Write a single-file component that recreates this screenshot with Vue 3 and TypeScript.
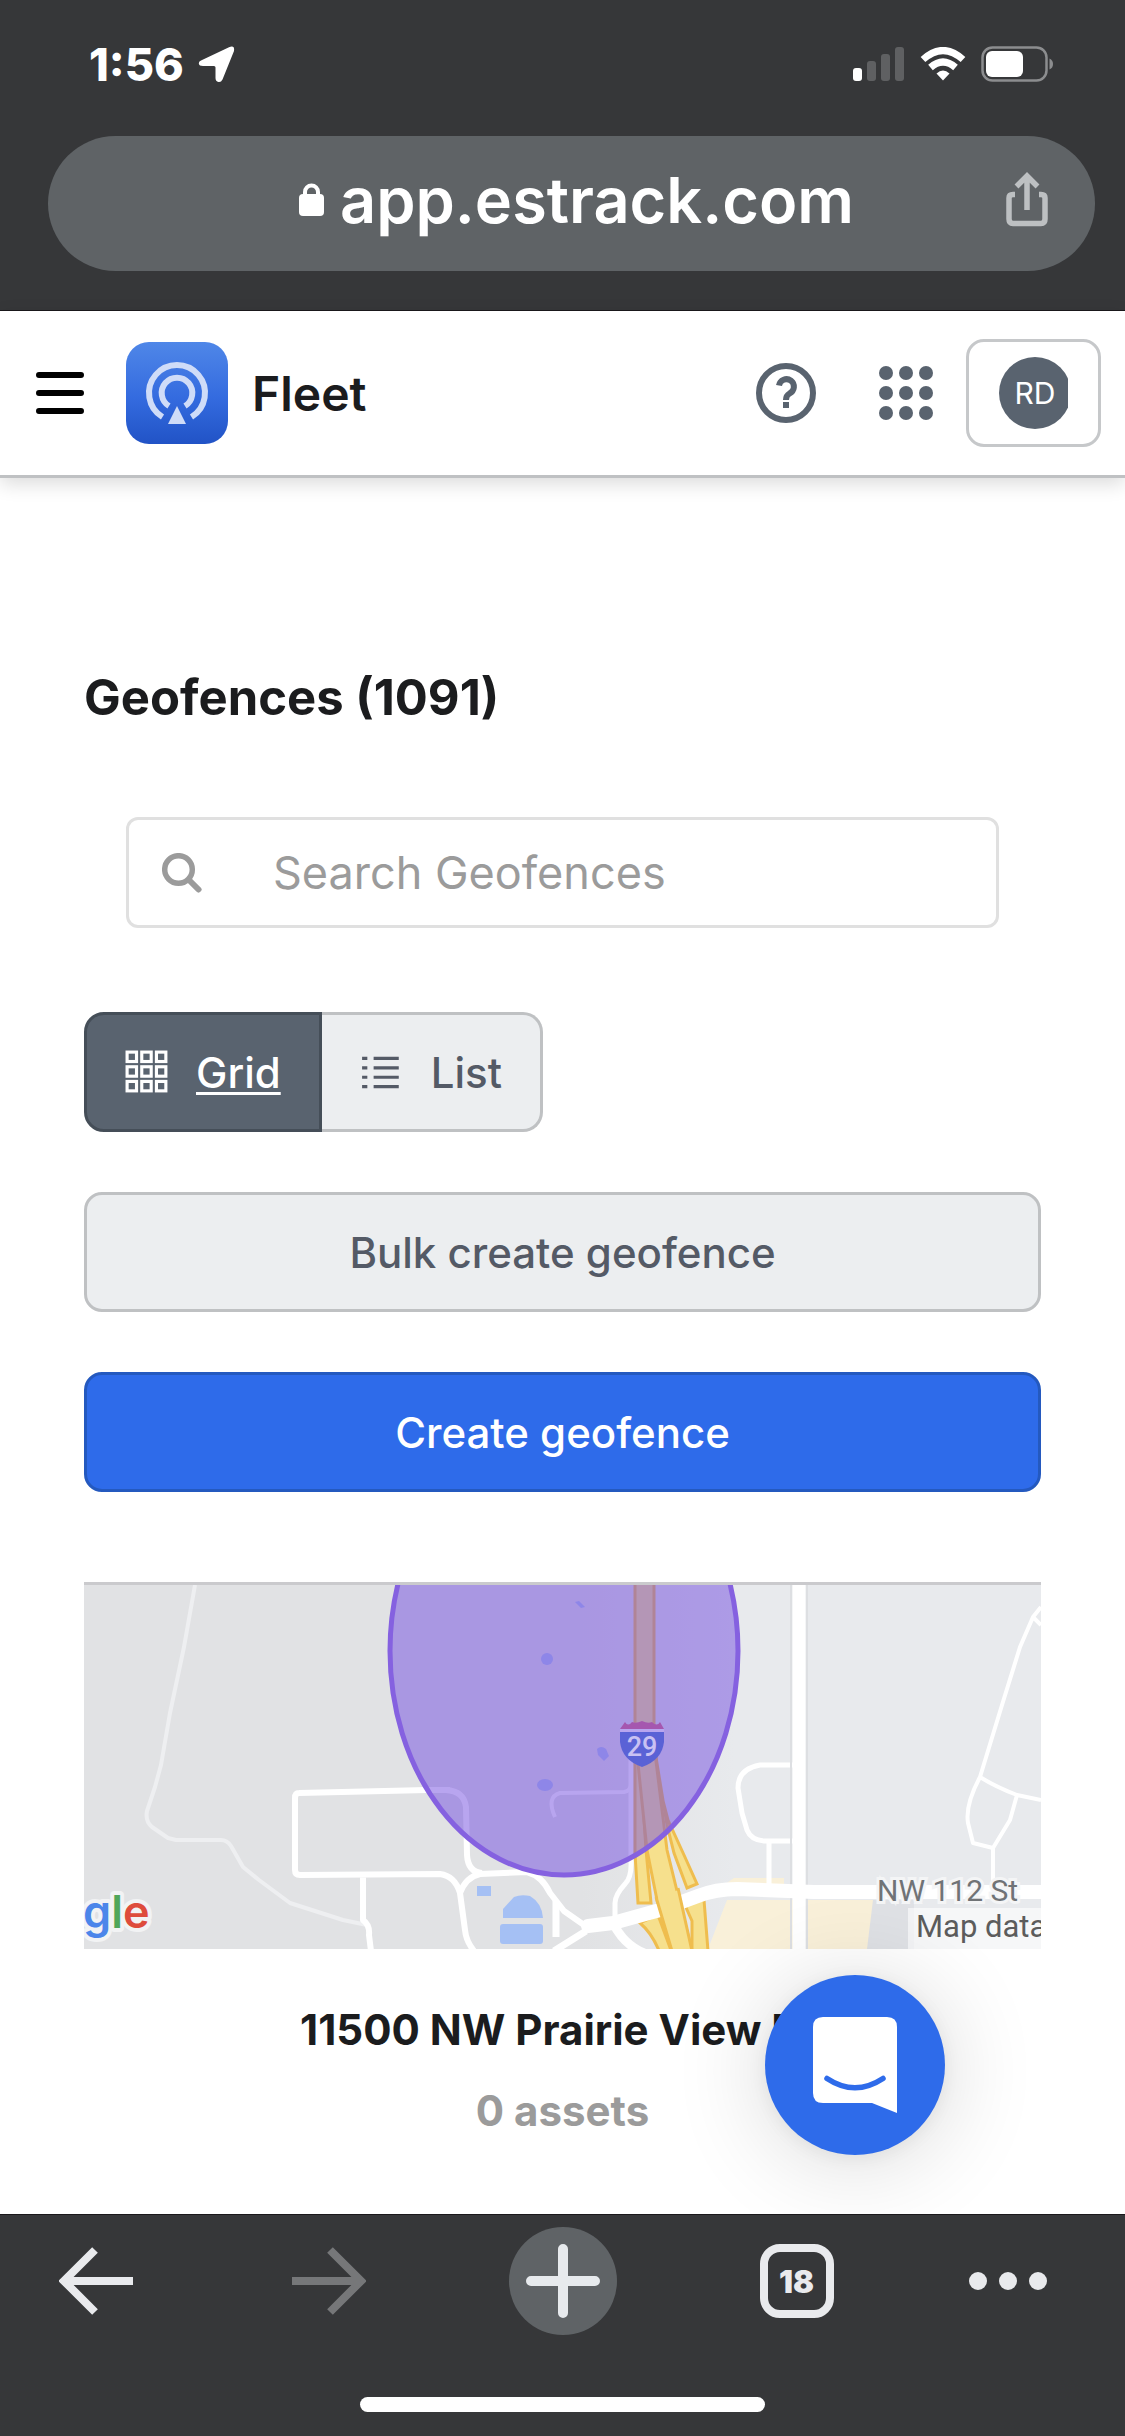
<script setup lang="ts">
import { ref } from 'vue'

type View = 'grid' | 'list'

const view = ref<View>('grid')
const query = ref('')
const total = 1091
const tabs = 18
const dots = [7, 27, 47]
const cells = [2, 16, 30]
const rows = [8, 17, 26, 35]
</script>

<template>
  <div class="screen">
    <div class="chrome">
      <div class="status">
        <div class="clock">
          <span>1:56</span>
          <svg width="38" height="38" viewBox="0 0 38 38" aria-hidden="true">
            <path d="M3 15.500 31 2.200Q37 0 36 6L24.500 34.500Q23 37.500 20.500 37Q17.500 36.500 17.500 33V22.500Q17.500 21 16 21H5Q1 21 .8 18.500Q.6 16.500 3 15.500Z" fill="#fff" />
          </svg>
        </div>
        <div class="indicators">
          <svg width="52" height="34" viewBox="0 0 52 34" aria-hidden="true">
            <rect x="0" y="21" width="9" height="13" rx="3" fill="#fff" />
            <rect x="14" y="14" width="9" height="20" rx="3" fill="#5f6062" />
            <rect x="28" y="7" width="9" height="27" rx="3" fill="#5f6062" />
            <rect x="42" y="0" width="9" height="34" rx="3" fill="#5f6062" />
          </svg>
          <svg width="46" height="34" viewBox="0 0 46 34" aria-hidden="true">
            <path d="M3 12.500Q23-5.500 43 12.500" fill="none" stroke="#fff" stroke-width="7" />
            <path d="M10.500 20.500Q23 9.500 35.500 20.500" fill="none" stroke="#fff" stroke-width="7" />
            <path d="M16.500 26.500Q23 20.500 29.500 26.500L23 33.500Z" fill="#fff" />
          </svg>
          <svg width="73" height="36" viewBox="0 0 73 36" aria-hidden="true">
            <rect x="1.500" y="1.500" width="64" height="33" rx="10" fill="none" stroke="#8c8d8f" stroke-width="2.500" />
            <rect x="5" y="5" width="37" height="26" rx="6" fill="#fff" />
            <path d="M68.500 12.500Q72 14 72 18T68.500 23.500Z" fill="#8c8d8f" />
          </svg>
        </div>
      </div>
      <div class="address">
        <a class="site" href="#">
          <svg width="25" height="34" viewBox="0 0 25 34" aria-hidden="true">
            <rect x="0" y="11" width="25" height="22" rx="4" fill="#fff" />
            <path d="M6 13V9A6.500 6.500 0 0 1 19 9V13" fill="none" stroke="#fff" stroke-width="4" />
          </svg>
          <span>app.estrack.com</span>
        </a>
        <button class="plain share" type="button" aria-label="Share">
          <svg width="42" height="55" viewBox="0 0 42 55" aria-hidden="true">
            <path d="M9 22.500H7Q3 22.500 3 26V47Q3 51.500 7 51.500H35Q39 51.500 39 47V26Q39 22.500 35 22.500H33M21 38V5M10.500 14.500 21 4 31.500 14.500" fill="none" stroke="#bdc0c2" stroke-width="5.500" />
          </svg>
        </button>
      </div>
    </div>

    <header class="topbar">
      <button class="plain" type="button" aria-label="Menu">
        <svg width="48" height="42" viewBox="0 0 48 42" aria-hidden="true">
          <path d="M3 3H45M3 21H45M3 39H45" stroke="#000" stroke-width="6" stroke-linecap="round" />
        </svg>
      </button>
      <a class="brand" href="#">
        <svg width="102" height="102" viewBox="0 0 102 102" aria-hidden="true">
          <defs>
            <linearGradient id="tile" x1="0" y1="0" x2="0" y2="1">
              <stop offset="0" stop-color="#4f87e8" />
              <stop offset=".55" stop-color="#346bdf" />
              <stop offset="1" stop-color="#2153c6" />
            </linearGradient>
          </defs>
          <rect width="102" height="102" rx="23" fill="url(#tile)" />
          <g fill="none" stroke="#cfdcf8" stroke-width="6">
            <path d="M36.500 75A28 28 0 1 1 65.500 75" />
            <path d="M43 64A15.300 15.300 0 1 1 59 64" />
          </g>
          <path d="M51 64 60 82H42Z" fill="#cfdcf8" />
        </svg>
        <span>Fleet</span>
      </a>
      <button class="plain help" type="button" aria-label="Help">
        <svg width="60" height="60" viewBox="0 0 60 60" aria-hidden="true">
          <circle cx="30" cy="30" r="27" fill="none" stroke="#59636f" stroke-width="6" />
          <path d="M23 22.500A7.500 7.500 0 1 1 33.500 30.500Q30 32.500 30 37" fill="none" stroke="#59636f" stroke-width="6" />
          <rect x="27" y="39" width="6" height="6" fill="#59636f" />
        </svg>
      </button>
      <button class="plain apps" type="button" aria-label="Apps">
        <svg width="54" height="54" viewBox="0 0 54 54" aria-hidden="true">
          <template v-for="y in dots" :key="y">
            <circle v-for="x in dots" :key="x" :cx="x" :cy="y" r="7" fill="#59636f" />
          </template>
        </svg>
      </button>
      <button class="account" type="button"><span class="clip"><span class="avatar">RD</span></span></button>
    </header>

    <main class="content">
      <h1>Geofences ({{ total }})</h1>

      <label class="search">
        <svg width="40" height="40" viewBox="0 0 40 40" aria-hidden="true">
          <circle cx="16.500" cy="16.500" r="13.800" fill="none" stroke="#9b9b9b" stroke-width="5.500" />
          <path d="M27 27 36.500 36.500" stroke="#9b9b9b" stroke-width="6" stroke-linecap="round" />
        </svg>
        <input v-model="query" type="text" placeholder="Search Geofences" aria-label="Search Geofences" />
      </label>

      <div class="views">
        <button type="button" :class="{ on: view === 'grid' }" @click="view = 'grid'">
          <svg width="44" height="44" viewBox="0 0 42 42" aria-hidden="true">
            <template v-for="y in cells" :key="y">
              <rect v-for="x in cells" :key="x" :x="x" :y="y" width="9" height="9" fill="none" stroke="currentColor" stroke-width="3" />
            </template>
          </svg>
          <span>Grid</span>
        </button>
        <button type="button" :class="{ on: view === 'list' }" @click="view = 'list'">
          <svg width="44" height="44" viewBox="0 0 42 42" aria-hidden="true">
            <path v-for="y in rows" :key="y" :d="`M2 ${y}H7M13 ${y}H37`" stroke="currentColor" stroke-width="3" />
          </svg>
          <span>List</span>
        </button>
      </div>

      <button class="action" type="button">Bulk create geofence</button>
      <button class="action primary" type="button">Create geofence</button>

      <article class="card">
        <svg class="map" viewBox="0 0 957 364" role="img" aria-label="Geofence map">
          <defs>
            <linearGradient id="land" x1="0" y1="0" x2="1" y2="0">
              <stop offset=".52" stop-color="#e1e2e4" />
              <stop offset=".68" stop-color="#e8eaed" />
            </linearGradient>
          </defs>
          <rect width="957" height="364" fill="url(#land)" />
          <path d="M783 315H830V364H783Z" fill="#dfe1e5" />
          <path d="M643 315H709V364H624ZM724 315H789L783 364H724ZM650 293H700V300H640Z" fill="#f9f0d9" />

          <g fill="none" stroke="#fff" stroke-linejoin="round">
            <path d="M111 0 100 62 86 128 77 180 71 202 63 226Q61 236 68 242L84 253 92 255H137Q143 255 147 261L159 282 175 295 206 318 259 335 283 340" stroke="#eeeff1" stroke-width="4" />
            <path d="M366 205H343L215 208Q211 208 211 213V285Q211 290 216 290L356 289Q371 291 376 308L381 345Q382 356 390 366M279 291V335Q286 340 285 350L287 366" stroke-width="6" />
            <path d="M362 205Q380 206 382 222L383 270Q384 287 398 288M376 308Q382 292 396 289L443 287Q458 291 466 308L480 326 500 340" stroke-width="6" />
            <path d="M470 366 502 346M472 316V352" stroke-width="7" />
            <path d="M529 338Q540 360 560 368" stroke-width="9" />
            <path d="M547 150V275Q548 292 541 299 531 310 531 318V336" stroke-width="5" />
            <path d="M471 232Q462 212 476 208L540 207Q546 206 547 200" stroke-width="4" />
            <path d="M709 180H676Q654 184 654 203L658 228 663 245Q667 255 680 256H709M685 257V300" stroke-width="5" />
            <path d="M957 22 949 32 936 62 918 120 896 192Q881 220 884 238L889 258 909 263M896 192Q912 202 933 210L957 215M933 210 926 235 909 263V300M949 32 957 40" stroke-width="4" />
          </g>
          <path d="M707 0V364M723 0V364" stroke="#dddfe2" stroke-width="2" />
          <path d="M715 0V364" stroke="#fff" stroke-width="13" />

          <g fill="#f6e08d" stroke="#efbd4e" stroke-width="3">
            <path d="M551 170V268L554 318H567L562 265 556 170Z" />
            <path d="M570 160 583 240 590 268 603 303 613 299 600 270 584 235 575 200 571 160Z" />
            <path d="M551-5V150L563 265 574 320 588 366H608L594 310 583 265 570 160V-5Z" />
            <path d="M556 338Q568 348 576 368H588L574 330ZM600 318 608 336 608 366H624L620 315Z" />
          </g>
          <path d="M957 307H730L653 304Q632 304 614 311L576 325 529 338 504 341" fill="none" stroke="#fff" stroke-width="14" stroke-linejoin="round" stroke-linecap="round" />
          <path d="M573 314 588 368H608L594 305Z" fill="#f6e08d" />
          <path d="M572 312 588 366M594 303 608 366" stroke="#efbd4e" stroke-width="3" />

          <g fill="#a5c0f4">
            <rect x="393" y="301" width="14" height="10" />
            <path d="M419 333V324L430 312Q437 309 446 311Q458 318 459 333Z" />
            <rect x="416" y="339" width="43" height="20" rx="3" />
          </g>

          <g>
            <path d="M541 137Q544 142 548 137 552 139 558 136 564 139 568 137 573 142 576 137L580 144H536Z" fill="#d8627f" />
            <path d="M536 147H580V157Q578 175 558 182Q538 175 536 157Z" fill="#4379cc" />
            <path d="M536 145.500H580" stroke="#fff" stroke-width="3" />
          </g>
          <ellipse cx="480" cy="66" rx="174" ry="224" fill="#714ce0" fill-opacity=".5" stroke="#8561e0" stroke-width="5" />
          <g fill="#8e86e8">
            <ellipse cx="463" cy="74" rx="6" ry="6" />
            <ellipse cx="461" cy="200" rx="8" ry="6" />
            <path d="M491 17 495 16 501 22 497 23Z" />
            <path d="M513 164Q517 160 522 164L525 171 520 176 514 170Z" />
          </g>
          <text x="558" y="171" text-anchor="middle" class="route">29</text>

          <rect x="824" y="323" width="133" height="41" fill="#fff" fill-opacity=".6" />
          <text x="793" y="316" class="street">NW 112 St</text>
          <text x="832" y="352" class="credit">Map data</text>
          <text x="-1" y="343" class="mark"><tspan fill="#4c86ea">g</tspan><tspan fill="#4fa65a">l</tspan><tspan fill="#de4c3c">e</tspan></text>
        </svg>
        <h2>11500 NW Prairie View Rd</h2>
        <p>0 assets</p>
      </article>

      <button class="chat" type="button" aria-label="Open chat">
        <svg width="84" height="96" viewBox="0 0 84 96" aria-hidden="true">
          <path d="M10 0H74Q84 0 84 10V96L59 86H10Q0 86 0 76V10Q0 0 10 0Z" fill="#fff" />
          <path d="M14 61.500Q42 80 70 61.500" fill="none" stroke="#2e6bea" stroke-width="5.500" stroke-linecap="round" />
        </svg>
      </button>
    </main>

    <footer class="toolbar">
      <nav>
        <button class="plain" type="button" aria-label="Back">
          <svg width="74" height="68" viewBox="0 0 74 68" aria-hidden="true">
            <path d="M74 34H6M36 3 5 34 36 65" fill="none" stroke="#e9eaed" stroke-width="8" />
          </svg>
        </button>
        <button class="plain" type="button" aria-label="Forward">
          <svg width="74" height="68" viewBox="0 0 74 68" aria-hidden="true">
            <path d="M0 34H68M38 3 69 34 38 65" fill="none" stroke="#767779" stroke-width="8" />
          </svg>
        </button>
        <button class="plain new-tab" type="button" aria-label="New tab">
          <svg width="74" height="74" viewBox="0 0 74 74" aria-hidden="true">
            <path d="M37 5V69M5 37H69" stroke="#e7eaed" stroke-width="10" stroke-linecap="round" />
          </svg>
        </button>
        <button class="tabs" type="button" aria-label="Tabs">{{ tabs }}</button>
        <button class="plain" type="button" aria-label="More">
          <svg width="80" height="20" viewBox="0 0 80 20" aria-hidden="true">
            <circle cx="10" cy="10" r="9" fill="#e9eaed" />
            <circle cx="40" cy="10" r="9" fill="#e9eaed" />
            <circle cx="70" cy="10" r="9" fill="#e9eaed" />
          </svg>
        </button>
      </nav>
      <div class="home"></div>
    </footer>
  </div>
</template>

<style>
body {
  margin: 0;
  background: #fff;
}
</style>

<style scoped>
.screen {
  display: flex;
  flex-direction: column;
  min-height: 100vh;
  font-family: Inter, "Liberation Sans", sans-serif;
  color: #1b1c1e;
}
.screen * {
  box-sizing: border-box;
}
svg {
  display: block;
  flex: none;
}
button {
  font: inherit;
  color: inherit;
  cursor: pointer;
}
a {
  color: inherit;
  text-decoration: none;
}
.plain {
  display: flex;
  align-items: center;
  justify-content: center;
  padding: 0;
  border: 0;
  background: none;
}

.chrome {
  background: #363739;
  border-bottom: 1px solid #1a181b;
  padding-bottom: 39px;
  color: #fff;
}
.status {
  display: flex;
  align-items: center;
  justify-content: space-between;
  height: 128px;
  padding: 0 71px 0 89px;
}
.clock {
  display: flex;
  align-items: center;
  gap: 14px;
  font-size: 45px;
  font-weight: 800;
}
.indicators {
  display: flex;
  align-items: center;
  gap: 15px;
}
.address {
  display: grid;
  grid-template-columns: 1fr auto 1fr;
  align-items: center;
  height: 135px;
  margin: 8px 30px 0 48px;
  padding: 0 47px 8px 57px;
  border-radius: 68px;
  background: #5f6366;
}
.site {
  grid-column: 2;
  display: flex;
  align-items: center;
  gap: 16px;
  font-size: 63px;
  line-height: 80px;
  font-weight: 600;
}
.share {
  justify-self: end;
}

.topbar {
  display: flex;
  align-items: center;
  height: 167px;
  padding: 0 24px 0 36px;
  border-bottom: 3px solid #bfc1c3;
  box-shadow: 0 6px 18px rgba(0, 0, 0, 0.14);
}
.brand {
  display: flex;
  align-items: center;
  gap: 24px;
  margin: 0 auto 0 42px;
  font-size: 48px;
  font-weight: 600;
}
.apps {
  margin: 0 33px 0 63px;
}
.account {
  display: flex;
  justify-content: center;
  align-items: center;
  width: 135px;
  height: 108px;
  padding: 0;
  border: 3px solid #c6c8ca;
  border-radius: 18px;
  background: #fff;
}
.clip {
  width: 69px;
  overflow: hidden;
}
.avatar {
  display: block;
  width: 72px;
  border-radius: 50%;
  background: #59636f;
  color: #fff;
  font-size: 30px;
  line-height: 72px;
}

.content {
  position: relative;
  flex: 1;
  padding: 191px 84px 59px;
}
h1 {
  margin: 0;
  font-size: 49px;
  line-height: 58px;
  font-weight: 700;
}
.search {
  display: flex;
  align-items: center;
  height: 111px;
  margin: 90px 42px 84px;
  padding: 0 33px;
  border: 3px solid #e0e0e0;
  border-radius: 12px;
}
.search input {
  flex: 1;
  min-width: 0;
  margin-left: 71px;
  padding: 0;
  border: 0;
  outline: 0;
  background: none;
  font: inherit;
  font-size: 45px;
}
.search input::placeholder {
  color: #9b9b9b;
  opacity: 1;
}
.views {
  display: flex;
}
.views button {
  display: flex;
  align-items: center;
  gap: 27px;
  height: 120px;
  padding: 0 38px;
  border: 3px solid #bfc1c3;
  border-left-width: 0;
  border-radius: 0 20px 20px 0;
  background: #eceef0;
  color: #545a66;
  font-size: 42px;
  font-weight: 500;
}
.views button:first-child {
  border-left-width: 3px;
  border-radius: 20px 0 0 20px;
}
.views .on {
  border-color: #454e58;
  background: #59636f;
  color: #fff;
}
.views .on span {
  text-decoration: underline;
  text-decoration-thickness: 3px;
  text-underline-offset: 4px;
}
.action {
  display: block;
  width: 100%;
  height: 120px;
  margin-top: 60px;
  border: 3px solid #bfc1c3;
  border-radius: 18px;
  background: #eceef0;
  color: #545a66;
  font-size: 42px;
  font-weight: 500;
}
.primary {
  border-color: #2459bf;
  background: #2e6bea;
  color: #fff;
}

.card {
  margin-top: 90px;
  border-top: 3px solid #cacacd;
  text-align: center;
}
.map {
  width: 100%;
  height: auto;
}
.route {
  font: 500 27px Roboto, sans-serif;
  fill: #c9c1f3;
}
.street,
.credit {
  font: 400 30px Roboto, sans-serif;
  fill: #707376;
}
.street {
  stroke: #f4f5f6;
  stroke-width: 6px;
  paint-order: stroke;
}
.credit {
  font-size: 31px;
  fill: #5c5c5c;
}
.mark {
  font-size: 45px;
  font-weight: 600;
  stroke: #f2f3f4;
  stroke-width: 8px;
  stroke-linejoin: round;
  paint-order: stroke;
}
h2,
.card p {
  margin: 56px 0 0;
  font-size: 42px;
  line-height: 50px;
  font-weight: 700;
}
.card p {
  margin-top: 31px;
  color: #9b9b9b;
}
.chat {
  position: absolute;
  right: 180px;
  bottom: 59px;
  display: flex;
  align-items: center;
  justify-content: center;
  width: 180px;
  height: 180px;
  padding: 0;
  border: 0;
  border-radius: 50%;
  background: #2e6bea;
  box-shadow: 0 3px 18px rgba(0, 0, 0, 0.06), 0 6px 96px rgba(0, 0, 0, 0.16);
}

.toolbar {
  position: relative;
  padding: 12px 0 24px;
  border-top: 1px solid #1a181b;
  background: #363739;
}
.toolbar nav {
  display: grid;
  grid-template-columns: 192fr 274fr 193fr 275fr 148fr 43fr;
  align-items: center;
  justify-items: center;
}
.new-tab {
  width: 108px;
  height: 108px;
  border-radius: 50%;
  background: #5f6366;
}
.tabs {
  width: 74px;
  height: 74px;
  padding: 0;
  border: 8px solid #e9eaed;
  border-radius: 20px;
  background: none;
  color: #e9eaed;
  font-size: 31px;
  font-weight: 900;
}
.home {
  width: 36%;
  height: 15px;
  margin: 62px auto 0;
  border-radius: 8px;
  background: #fff;
}
</style>
